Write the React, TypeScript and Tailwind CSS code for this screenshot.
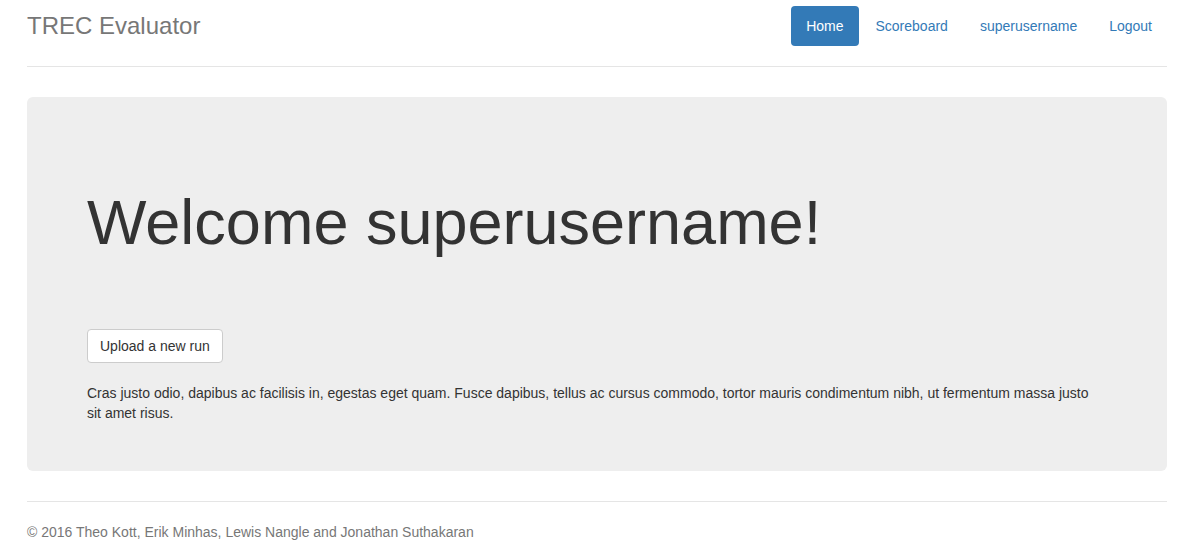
export default function App() {
  const navItems = ["Home", "Scoreboard", "superusername", "Logout"];

  return (
    <div className="min-h-screen bg-white text-[14px] leading-[20px] text-[#333] font-['Liberation_Sans',Arial,sans-serif]">
      <div className="ml-[27px] w-[1140px]">
        {/* header */}
        <div className="flex items-center justify-between border-b border-[#e5e5e5] pt-[6px] pb-[20px]">
          <h3 className="m-0 text-[24px] leading-[40px] text-[#777]">TREC Evaluator</h3>
          <ul className="flex">
            {navItems.map((item, i) => (
              <li key={item} className="ml-[2px]">
                <a
                  href="#"
                  className={
                    i === 0
                      ? "block rounded-[4px] bg-[#337ab7] px-[15px] py-[10px] text-white"
                      : "block rounded-[4px] px-[15px] py-[10px] text-[#337ab7]"
                  }
                >
                  {item}
                </a>
              </li>
            ))}
          </ul>
        </div>

        {/* jumbotron */}
        <div className="mt-[30px] rounded-[6px] bg-[#eee] px-[60px] pt-[48px] pb-[48px]">
          <h1 className="mt-[43px] text-[63px] leading-[1.1] text-[#333]">Welcome superusername!</h1>
          <button className="mt-[72px] rounded-[4px] border border-[#ccc] bg-white px-[12px] py-[6px] text-[14px] leading-[20px] text-[#333]">
            Upload a new run
          </button>
          <p className="mt-[20px] pr-[12px]">
            Cras justo odio, dapibus ac facilisis in, egestas eget quam. Fusce dapibus, tellus ac cursus commodo, tortor
            mauris condimentum nibh, ut fermentum massa justo sit amet risus.
          </p>
        </div>

        {/* footer */}
        <footer className="mt-[30px] border-t border-[#e5e5e5] pt-[20px] text-[#777]">
          <p>© 2016 Theo Kott, Erik Minhas, Lewis Nangle and Jonathan Suthakaran</p>
        </footer>
      </div>
    </div>
  );
}
